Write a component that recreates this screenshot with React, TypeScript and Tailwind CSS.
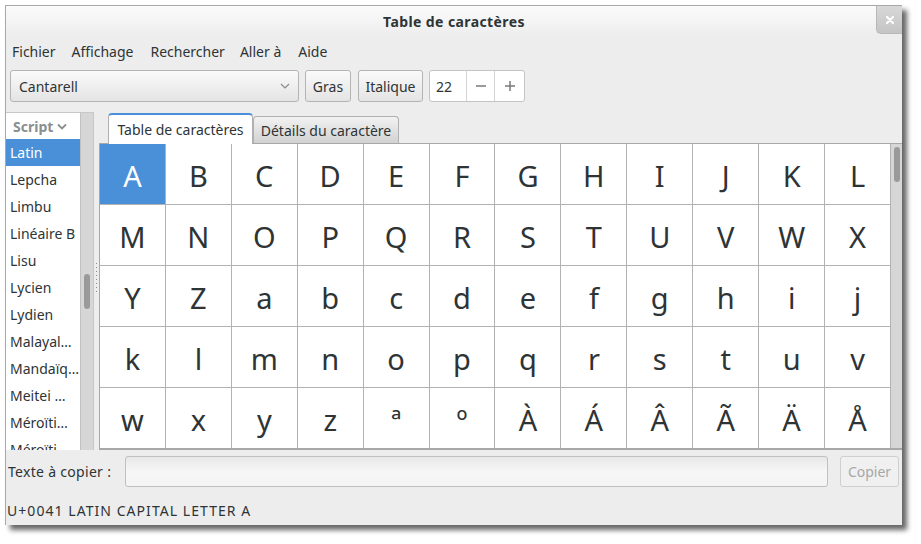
import React from "react";

const font = { fontFamily: '"Noto Sans", "Open Sans", sans-serif' };

const scripts = [
    "Lepcha",
    "Limbu",
    "Linéaire B",
    "Lisu",
    "Lycien",
    "Lydien",
    "Malayal…",
    "Mandaïq…",
    "Meitei …",
    "Méroïti…",
    "Méroïti…",
];

const chars = [
    "A", "B", "C", "D", "E", "F", "G", "H", "I", "J", "K", "L",
    "M", "N", "O", "P", "Q", "R", "S", "T", "U", "V", "W", "X",
    "Y", "Z", "a", "b", "c", "d", "e", "f", "g", "h", "i", "j",
    "k", "l", "m", "n", "o", "p", "q", "r", "s", "t", "u", "v",
    "w", "x", "y", "z", "ª", "º", "À", "Á", "Â", "Ã", "Ä", "Å",
];

export default function App() {
    return (
        <div className="w-[921px] h-[544px] bg-white pt-[5px] pl-[5px] overflow-hidden text-[#2e3436]" style={font}>
            <div className="relative w-[897px] h-[520px] bg-[#ededed] border-t border-l border-[#a8a8a8] flex flex-col shadow-[5px_5px_5px_rgba(0,0,0,0.6)]">
                {/* Title bar */}
                <div className="h-[30px] shrink-0 flex items-center justify-center bg-gradient-to-b from-[#fbfbfb] to-[#ededed]">
                    <span className="text-[14px] font-bold tracking-[0.4px] text-[#2e3436]">Table de caractères</span>
                </div>
                <div className="absolute top-0 right-0 w-[26px] h-[28px] rounded-bl-[5px] border-l border-b border-[#b8b8b8] bg-gradient-to-b from-[#d8d8d8] to-[#c4c4c4] flex items-center justify-center">
                    <svg width="10" height="10" viewBox="0 0 10 10">
                        <path d="M2 2 L8 8 M8 2 L2 8" stroke="#ffffff" strokeWidth="2.2" strokeLinecap="round" />
                    </svg>
                </div>

                {/* Menu bar */}
                <div className="h-[28px] shrink-0 flex items-center pl-[6px] text-[14px] mt-[1px]">
                    <span>Fichier</span>
                    <span className="ml-[16px]">Affichage</span>
                    <span className="ml-[17px]">Rechercher</span>
                    <span className="ml-[15px]">Aller à</span>
                    <span className="ml-[17px]">Aide</span>
                </div>

                {/* Toolbar */}
                <div className="h-[32px] shrink-0 flex items-center pl-[4px] mt-[5px] text-[14px]">
                    <div className="w-[289px] h-[32px] rounded-[3px] border border-[#b4b4b4] bg-gradient-to-b from-[#fafafa] to-[#e4e4e4] flex items-center justify-between pl-[8px] pr-[8px]">
                        <span>Cantarell</span>
                        <svg width="10" height="6" viewBox="0 0 10 6">
                            <path d="M1 1 L5 5 L9 1" fill="none" stroke="#8a8a8a" strokeWidth="1.2" />
                        </svg>
                    </div>
                    <div className="ml-[6px] w-[46px] h-[32px] rounded-[3px] border border-[#b4b4b4] bg-gradient-to-b from-[#fafafa] to-[#e4e4e4] flex items-center justify-center">
                        Gras
                    </div>
                    <div className="ml-[7px] w-[65px] h-[32px] rounded-[3px] border border-[#b4b4b4] bg-gradient-to-b from-[#fafafa] to-[#e4e4e4] flex items-center justify-center">
                        Italique
                    </div>
                    <div className="ml-[6px] w-[96px] h-[32px] rounded-[3px] border border-[#c4c4c4] bg-white flex items-stretch">
                        <div className="w-[36px] flex items-center pl-[6px]">22</div>
                        <div className="w-[28px] border-l border-[#d4d4d4] flex items-center justify-center">
                            <svg width="12" height="12" viewBox="0 0 12 12">
                                <path d="M1 6 H11" stroke="#7a7a7a" strokeWidth="1.5" />
                            </svg>
                        </div>
                        <div className="flex-1 border-l border-[#d4d4d4] flex items-center justify-center">
                            <svg width="12" height="12" viewBox="0 0 12 12">
                                <path d="M1 6 H11 M6 1 V11" stroke="#7a7a7a" strokeWidth="1.5" />
                            </svg>
                        </div>
                    </div>
                </div>

                {/* Main area */}
                <div className="flex mt-[10px] h-[338px] shrink-0">
                    {/* Script list */}
                    <div className="w-[88px] h-[338px] flex border-r border-[#b6b6b6] border-t border-[#c8c8c8] overflow-hidden">
                        <div className="w-[74px] bg-white flex flex-col">
                            <div className="h-[26px] shrink-0 flex items-center pl-[7px] gap-[4px] text-[14px] font-bold text-[#8b8e8f]">
                                <span>Script</span>
                                <svg width="10" height="7" viewBox="0 0 10 7">
                                    <path d="M1 1.5 L5 5.5 L9 1.5" fill="none" stroke="#8b8e8f" strokeWidth="1.8" />
                                </svg>
                            </div>
                            <div className="h-[27px] shrink-0 flex items-center pl-[4px] bg-[#4a90d9] text-white text-[14px]">Latin</div>
                            {scripts.map((s, i) => (
                                <div key={i} className="h-[27px] shrink-0 flex items-center pl-[4px] text-[14px] whitespace-nowrap">
                                    {s}
                                </div>
                            ))}
                        </div>
                        <div className="flex-1 bg-[#d6d6d6] border-l border-[#c2c2c2] flex justify-center">
                            <div className="mt-[161px] w-[6px] h-[35px] rounded-full bg-[#9a9a9a]" />
                        </div>
                    </div>

                    {/* Pane handle */}
                    <div className="w-[5px] flex flex-col items-center justify-center gap-[3px] -mt-[8px]">
                        {[0, 1, 2, 3, 4, 5, 6, 7].map((d) => (
                            <div key={d} className="w-[1px] h-[1px] bg-[#8a8a8a]" />
                        ))}
                    </div>

                    {/* Notebook */}
                    <div className="flex flex-col w-[803px]">
                        <div className="h-[32px] flex items-end pl-[9px] border-b border-[#a8a8a8]">
                            <div className="w-[145px] h-[31px] -mb-[1px] bg-white border-t-2 border-x border-[#4a90d9] border-x-[#b0b0b0] rounded-t-[4px] flex items-center justify-center text-[14px] z-10">
                                Table de caractères
                            </div>
                            <div className="w-[146px] h-[27px] bg-gradient-to-b from-[#f2f2f2] to-[#d2d2d2] border border-b-0 border-[#b0b0b0] rounded-t-[4px] flex items-center justify-center text-[14px]">
                                Détails du caractère
                            </div>
                        </div>
                        <div className="flex h-[306px] border-l border-[#a8a8a8] border-b-2 border-b-[#a8a8a8]">
                            <div className="w-[791px] grid grid-cols-12 grid-rows-[61px_61px_61px_61px_60px] bg-white">
                                {chars.map((c, i) => (
                                    <div
                                        key={i}
                                        className={
                                            "flex items-center justify-center pt-[3px] text-[29px] border-r border-[#b2b2b2] " +
                                            (i < 48 ? "border-b " : "") +
                                            (i === 0 ? "bg-[#4a90d9] text-white" : "text-[#2e3436]")
                                        }
                                    >
                                        {c}
                                    </div>
                                ))}
                            </div>
                            <div className="flex-1 bg-[#d6d6d6] flex justify-center">
                                <div className="mt-[3px] w-[6px] h-[35px] rounded-full bg-[#9a9a9a]" />
                            </div>
                        </div>
                    </div>
                </div>

                {/* Copy row */}
                <div className="flex items-center mt-[6px] h-[31px] shrink-0 text-[14px]">
                    <span className="ml-[2px] w-[117px] tracking-[0.3px]">Texte à copier :</span>
                    <div className="w-[703px] h-[31px] rounded-[3px] border border-[#c0c0c0] bg-gradient-to-b from-[#e8e8e8] via-[#f6f6f6] to-[#f4f4f4]" />
                    <div className="ml-[12px] w-[59px] h-[31px] rounded-[3px] border border-[#cfcfcf] bg-[#f0f0f0] flex items-center justify-center text-[#a6a8a8]">
                        Copier
                    </div>
                </div>

                {/* Status */}
                <div className="mt-[13px] pl-[1px] text-[14px] tracking-[1.05px]">U+0041 LATIN CAPITAL LETTER A</div>
            </div>
        </div>
    );
}
